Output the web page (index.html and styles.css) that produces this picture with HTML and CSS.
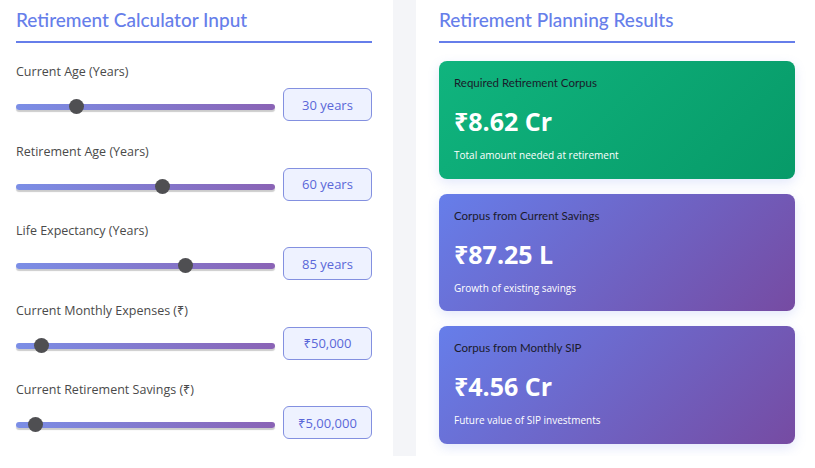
FILE: index.html
```html
<!DOCTYPE html>
<html lang="en">
<head>
<meta charset="utf-8">
<title>Retirement Calculator</title>
<link rel="stylesheet" href="styles.css">
</head>
<body>
<div class="layout">
  <section class="panel">
    <h2 class="panel-title">Retirement Calculator Input</h2>
    <div class="field">
      <div class="field-label">Current Age (Years)</div>
      <div class="field-row">
        <div class="slider"><div class="track"></div><div class="thumb" style="left:23.5%"></div></div>
        <div class="value-box">30 years</div>
      </div>
    </div>
    <div class="field">
      <div class="field-label">Retirement Age (Years)</div>
      <div class="field-row">
        <div class="slider"><div class="track"></div><div class="thumb" style="left:56.4%"></div></div>
        <div class="value-box">60 years</div>
      </div>
    </div>
    <div class="field">
      <div class="field-label">Life Expectancy (Years)</div>
      <div class="field-row">
        <div class="slider"><div class="track"></div><div class="thumb" style="left:65.5%"></div></div>
        <div class="value-box">85 years</div>
      </div>
    </div>
    <div class="field">
      <div class="field-label">Current Monthly Expenses (₹)</div>
      <div class="field-row">
        <div class="slider"><div class="track"></div><div class="thumb" style="left:10%"></div></div>
        <div class="value-box">₹50,000</div>
      </div>
    </div>
    <div class="field">
      <div class="field-label">Current Retirement Savings (₹)</div>
      <div class="field-row">
        <div class="slider"><div class="track"></div><div class="thumb" style="left:7.6%"></div></div>
        <div class="value-box">₹5,00,000</div>
      </div>
    </div>
  </section>
  <section class="panel">
    <h2 class="panel-title">Retirement Planning Results</h2>
    <div class="cards">
      <div class="card card-green">
        <div class="card-label">Required Retirement Corpus</div>
        <div class="card-value">₹8.62 Cr</div>
        <div class="card-note">Total amount needed at retirement</div>
      </div>
      <div class="card card-purple">
        <div class="card-label">Corpus from Current Savings</div>
        <div class="card-value">₹87.25 L</div>
        <div class="card-note">Growth of existing savings</div>
      </div>
      <div class="card card-purple">
        <div class="card-label">Corpus from Monthly SIP</div>
        <div class="card-value">₹4.56 Cr</div>
        <div class="card-note">Future value of SIP investments</div>
      </div>
    </div>
  </section>
</div>
</body>
</html>
```

FILE: styles.css
```css
* { box-sizing: border-box; }

body {
  margin: 0;
  background: #ffffff;
  font-family: "Open Sans", "Noto Sans", sans-serif;
  color: #444;
}

.layout {
  display: grid;
  grid-template-columns: 400px 400px;
  column-gap: 23px;
  margin-left: -7px;
  height: 456px;
  background: #f4f5f8;
  overflow: hidden;
}

.panel {
  background: #ffffff;
  padding: 0 21px 0 23px;
}

.panel-title {
  margin: 0;
  padding: 6px 0 7px;
  line-height: 28px;
  font-family: "Lato", "Noto Sans", sans-serif;
  font-size: 19px;
  font-weight: 500;
  color: #667eea;
  border-bottom: 2px solid #667eea;
}

.panel .panel-title { margin-bottom: 19px; }

.field { margin-bottom: 20.5px; }

.field-label {
  font-size: 12.5px;
  line-height: 20px;
  color: #4a4a4a;
  margin-bottom: 6px;
}

.field-row {
  display: flex;
  align-items: center;
  gap: 8px;
}

.slider {
  position: relative;
  flex: 1;
  height: 33px;
}

.track {
  position: absolute;
  left: 0;
  right: 0;
  top: 16px;
  height: 6px;
  border-radius: 3px;
  background: linear-gradient(90deg, #7b8ee6, #8a63b5);
  box-shadow: 0 2px 1px rgba(0, 0, 0, 0.2);
}

.thumb {
  position: absolute;
  top: 11px;
  width: 15px;
  height: 15px;
  margin-left: -7.5px;
  border-radius: 50%;
  background: #4f4f52;
}

.value-box {
  width: 89px;
  height: 33px;
  display: flex;
  align-items: center;
  justify-content: center;
  border: 1px solid #8390e0;
  border-radius: 6px;
  background: #eef2ff;
  color: #5a67d8;
  font-size: 13px;
}

.cards {
  display: flex;
  flex-direction: column;
  gap: 15px;
  margin-top: -1px;
}

.card {
  height: 117.5px;
  padding: 15px 15px;
  border-radius: 8px;
  color: #ffffff;
  box-shadow: 0 4px 12px rgba(102, 126, 234, 0.18);
}

.card-green {
  background: linear-gradient(135deg, #10b47e, #079a68);
}

.card-purple {
  background: linear-gradient(135deg, #667eea, #764ba2);
}

.card-label {
  font-family: "Lato", "Noto Sans", sans-serif;
  font-size: 11.5px;
  line-height: 14px;
  color: #1a1a2a;
  margin-bottom: 15px;
}

.card-value {
  font-size: 25px;
  font-weight: 700;
  line-height: 32px;
  margin-bottom: 11px;
}

.card-note {
  font-size: 10px;
  line-height: 14px;
}
```
